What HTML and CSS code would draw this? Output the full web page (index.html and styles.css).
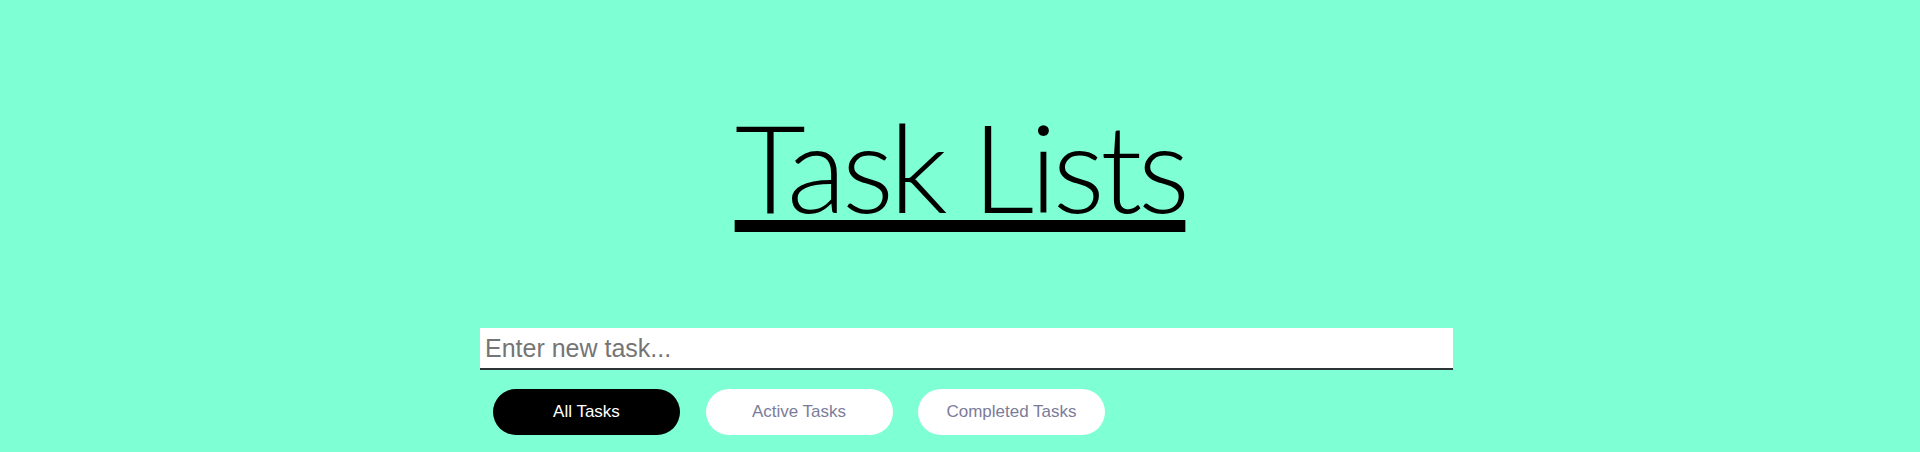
FILE: index.html
```html
<!DOCTYPE html>
<html lang="en">
<head>
<meta charset="utf-8">
<title>Task Lists</title>
<link rel="stylesheet" href="styles.css">
</head>
<body>
  <header class="header">
    <h1 class="title">Task Lists</h1>
  </header>
  <main class="main">
    <input class="task-input" type="text" placeholder="Enter new task...">
    <div class="filters">
      <button class="filter filter-active">All Tasks</button>
      <button class="filter">Active Tasks</button>
      <button class="filter">Completed Tasks</button>
    </div>
  </main>
</body>
</html>
```
FILE: styles.css
```css
html, body {
  margin: 0;
  padding: 0;
}
body {
  background: #7fffd4;
  font-family: "Liberation Sans", Arial, sans-serif;
  min-height: 452px;
}
.header {
  text-align: center;
  padding-top: 104px;
}
.title {
  margin: 0;
  font-family: Lato, "Open Sans", sans-serif;
  font-weight: 300;
  font-size: 123px;
  line-height: 1;
  letter-spacing: -4.6px;
  color: #000;
  text-decoration: underline;
  text-decoration-thickness: 12px;
  text-underline-offset: 7px;
}
.main {
  margin-top: 101px;
  margin-left: 480px;
  width: 973px;
}
.task-input {
  display: block;
  box-sizing: border-box;
  width: 100%;
  height: 42px;
  margin: 0;
  padding: 0 5px;
  border: none;
  border-bottom: 2px solid #2d3436;
  background: #fff;
  font-family: "Liberation Sans", Arial, sans-serif;
  font-size: 25px;
  color: #000;
  outline: none;
}
.task-input::placeholder {
  color: #757575;
}
.filters {
  display: flex;
  gap: 25.5px;
  padding: 19px 0 0 13px;
}
.filter {
  width: 187px;
  height: 46px;
  border: none;
  border-radius: 23px;
  background: #fff;
  color: #7c7c9a;
  font-family: "Liberation Sans", Arial, sans-serif;
  font-size: 17px;
  padding: 0;
  cursor: pointer;
}
.filter-active {
  background: #000;
  color: #fff;
}
```
